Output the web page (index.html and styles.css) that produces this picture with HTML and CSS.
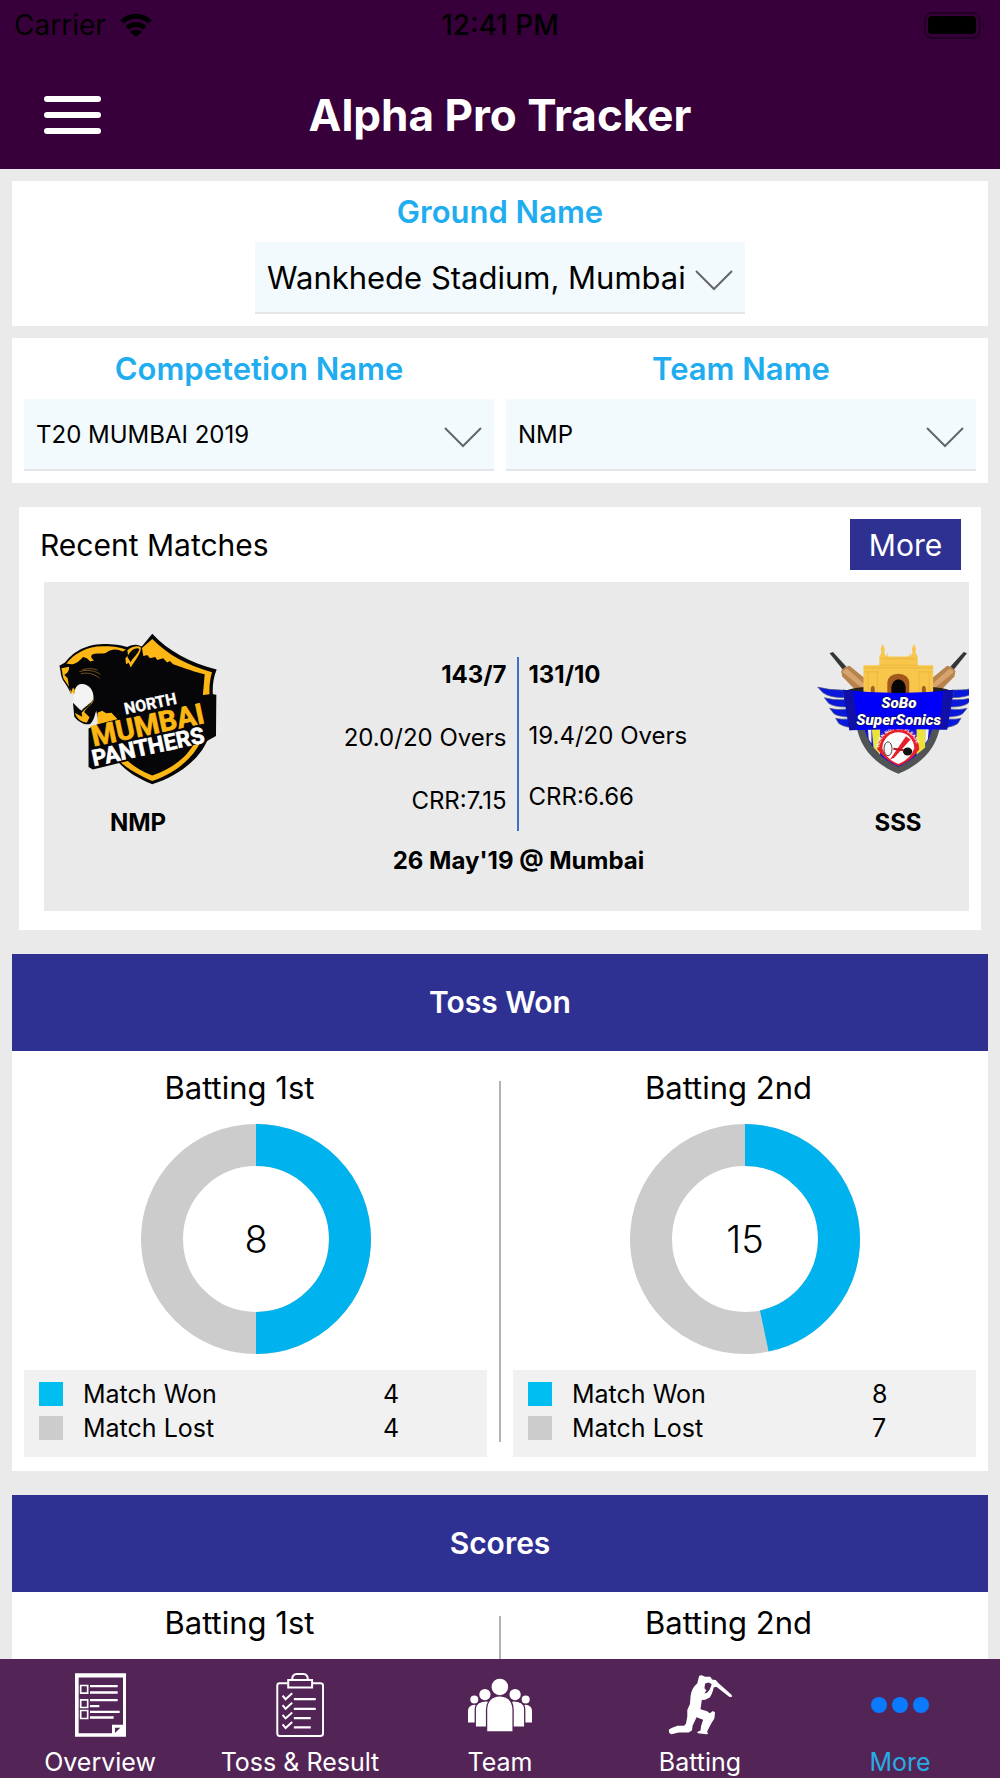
FILE: index.html
```
<!DOCTYPE html>
<html lang="en">
<head>
    <meta charset="UTF-8">
    <meta name="viewport" content="width=device-width, initial-scale=1.0">
    <title>Alpha Pro Tracker</title>
    <link rel="stylesheet" href="styles.css">
</head>
<body>
    <header class="header">
        <div class="status-bar">
            <div class="carrier">
                <span>Carrier</span>
                <svg width="32" height="24" viewBox="0 0 32 24">
                    <path d="M2 9 A20 20 0 0 1 30 9" fill="none" stroke="#000" stroke-width="5"/>
                    <path d="M7 15 A13 13 0 0 1 25 15" fill="none" stroke="#000" stroke-width="5"/>
                    <path d="M16 24 L10 19 A9 9 0 0 1 22 19 Z"/>
                </svg>
            </div>
            <span class="time">12:41 PM</span>
            <div class="battery">
                <svg width="62" height="27" viewBox="0 0 62 27">
                    <rect x="1" y="1" width="55" height="25" rx="7" fill="none" stroke="#220025" stroke-width="2"/>
                    <rect x="4" y="4" width="48" height="18" rx="4"/>
                    <path d="M59 9 Q62 13 59 18 Z" fill="#220025"/>
                </svg>
            </div>
        </div>
        <div class="title-bar">
            <button class="menu-button" type="button" aria-label="Menu">
                <span></span>
                <span></span>
                <span></span>
            </button>
            <h1>Alpha Pro Tracker</h1>
        </div>
    </header>

    <main class="content">
        <section class="filter-card">
            <div class="filter ground">
                <label for="ground">Ground Name</label>
                <div class="select-box">
                    <select id="ground">
                        <option>Wankhede Stadium, Mumbai</option>
                    </select>
                    <svg class="chevron" viewBox="0 0 38 21"><path d="M1 1 L19 19 L37 1"/></svg>
                </div>
            </div>
        </section>

        <section class="filter-card">
            <div class="filter">
                <label for="competition">Competetion Name</label>
                <div class="select-box">
                    <select id="competition">
                        <option>T20 MUMBAI 2019</option>
                    </select>
                    <svg class="chevron" viewBox="0 0 38 21"><path d="M1 1 L19 19 L37 1"/></svg>
                </div>
            </div>
            <div class="filter">
                <label for="team">Team Name</label>
                <div class="select-box">
                    <select id="team">
                        <option>NMP</option>
                    </select>
                    <svg class="chevron" viewBox="0 0 38 21"><path d="M1 1 L19 19 L37 1"/></svg>
                </div>
            </div>
        </section>

        <section class="recent">
            <div class="recent-head">
                <h2>Recent Matches</h2>
                <button class="more-button" type="button">More</button>
            </div>
            <div class="match">
                <div class="team">
                    <svg width="158" height="152" viewBox="56 66 476 458">
                        <path d="M337 68 C385 120 450 155 531 176 C515 215 518 250 524 300 L510 370 C490 440 420 495 337 522 C290 503 255 480 230 450 L200 300 L258 108 L306 106 Z" fill="#060608"/>
                        <path d="M337 84 C385 133 445 164 517 184 C508 215 508 240 511 280 L482 395 C460 440 410 488 337 512 C298 496 268 478 240 455 L300 330 L305 112 Z" fill="#fdb714"/>
                        <path d="M303 118 L300 138 L322 132 L330 142 L346 138 L352 147 L370 142 L382 155 L390 150 L400 160 C435 172 470 185 495 190 L487 280 L465 395 C445 435 400 475 337 495 C305 483 280 468 262 450 L200 380 L200 130 Z" fill="#060608"/>
                        <path d="M57 165 L74 155 C95 128 130 100 190 99 C220 99 245 103 262 108 C280 98 303 99 306 112 L330 250 L250 350 L178 345 L168 300 C162 320 160 330 150 340 C130 345 112 330 102 318 L98 276 C105 282 112 292 124 300 C132 288 150 282 160 265 C162 238 145 218 122 220 C112 222 104 228 102 250 L97 238 L92 250 C86 235 78 222 68 208 C60 195 62 180 57 165 Z" fill="#060608"/>
                        <path d="M102 250 C104 230 115 220 128 221 C148 224 160 243 158 262 C144 276 136 282 125 294 C116 288 110 280 98 276 Z" fill="#f4f4f4"/>
                        <g fill="#fdb714">
                            <path d="M78 158 C102 128 140 106 188 106 C220 105 242 110 258 116 L248 122 C230 113 215 114 200 124 C190 132 172 124 158 130 C150 134 152 142 162 148 L150 152 L140 142 L128 138 C118 150 106 160 92 160 Z"/>
                            <path d="M63 172 L86 168 C88 180 80 188 72 192 L82 202 L86 228 L74 210 C64 198 68 184 63 172 Z"/>
                            <path d="M262 118 C276 106 294 102 303 110 C302 130 288 145 272 170 L266 156 L258 160 L256 142 L264 134 Z"/>
                            <path d="M162 262 C160 280 140 288 132 304 L148 320 L140 336 C120 334 108 320 104 306 L114 312 L126 318 L124 306 C140 290 152 284 162 262 Z"/>
                            <path d="M88 232 L93 244 L98 230 L104 238 L101 252 L96 244 L91 250 Z"/>
                            <path d="M172 306 L186 300 L198 308 L214 306 L236 330 L172 348 Z"/>
                        </g>
                        <path d="M262 138 C270 118 290 108 298 114 C294 130 278 140 272 154 Z" fill="#060608"/>
                        <path d="M118 182 C140 176 160 178 180 190 M122 189 C142 184 160 188 178 202 M126 177 C142 172 158 172 172 178" fill="none" stroke="#a9762a" stroke-width="2"/>
                        <path d="M145 354 L170 342 L246 322 L252 268 L408 232 L412 262 L516 250 L530 252 L529 376 L494 396 L158 477 L145 470 Z" fill="#060608"/>
                        <g transform="rotate(-12 337 350)" font-family="Roboto, sans-serif" font-weight="bold">
                            <text x="266" y="296" font-size="48" fill="#fff" stroke="#fff">NORTH</text>
                            <text x="152" y="370" font-size="86" fill="#fdb714" stroke="#fdb714" stroke-width="2">MUMBAI</text>
                            <text x="140" y="428" font-size="68" fill="#fff" stroke="#fff" stroke-width="2">PANTHERS</text>
                        </g>
                    </svg>
                    <strong>NMP</strong>
                </div>

                <div class="score">
                    <div class="innings">
                        <div class="innings-side">
                            <strong>143/7</strong>
                            <span>20.0/20 Overs</span>
                            <span>CRR:7.15</span>
                        </div>
                        <div class="innings-side">
                            <strong>131/10</strong>
                            <span>19.4/20 Overs</span>
                            <span>CRR:6.66</span>
                        </div>
                    </div>
                    <strong>26 May'19 @ Mumbai</strong>
                </div>

                <div class="team away">
                    <svg width="152" height="132" viewBox="50 66 458 396">
                        <!-- bats -->
                        <g id="bat">
                            <path d="M88 96 L98 92 L138 136 L128 146 Z" fill="#333638"/>
                            <path d="M123 150 Q130 138 148 134 L192 170 L192 214 L165 206 L126 166 Z" fill="#b9834e"/>
                            <path d="M126 152 L140 142 L192 188 L192 206 Z" fill="#d6a56f"/>
                        </g>
                        <use href="#bat" transform="translate(590 0) scale(-1 1)"/>
                        <ellipse cx="295" cy="210" rx="155" ry="16" fill="#25201c"/>
                        <!-- gateway -->
                        <path d="M190 132 L238 132 L238 104 L244 96 L242 82 L248 68 L254 82 L253 96 L258 104 L270 106 L320 106 L332 104 L338 96 L336 82 L342 68 L348 82 L347 96 L353 104 L354 132 L400 132 L400 222 L190 222 Z" fill="#f7c64b"/>
                        <path d="M190 140 H400 M238 132 H354 M244 112 H348 M194 152 H236 M356 152 H398 M204 152 V215 M232 152 V215 M358 152 V215 M388 152 V215 M262 106 V96 M330 106 V96" stroke="#e8b03c" stroke-width="2" fill="none"/>
                        <path d="M262 222 V184 Q264 160 295 158 Q326 160 328 184 V222 Z" fill="#a3581d"/>
                        <path d="M274 222 V198 Q278 176 295 174 Q314 176 317 198 V222 Z" fill="#060606"/>
                        <path d="M212 218 V200 Q218 188 224 200 V218 Z M366 218 V200 Q372 188 378 200 V218 Z" fill="#9c601f"/>
                        <!-- shield -->
                        <path d="M168 310 C180 385 225 430 295 459 C365 430 410 385 422 310 Z" fill="#515454"/>
                        <path d="M190 310 C200 370 235 410 295 438 C355 410 390 370 400 310 Z" fill="#1616d8"/>
                        <path d="M214 310 H240 V402 L220 380 Z M350 310 H376 V380 L350 402 Z" fill="#eae33a"/>
                        <path d="M202 310 H214 V368 L206 355 Z M376 310 H388 L384 355 L376 368 Z" fill="#f5f5f5"/>
                        <path d="M232 385 A62 62 0 1 1 358 385 Q335 420 295 436 Q255 418 232 385 Z" fill="#e8202b"/>
                        <path d="M247 382 A48 48 0 1 1 343 382 Q335 412 295 430 Q255 412 247 382 Z" fill="#fff"/>
                        <path d="M318 346 L332 356 L282 412 L270 416 Z" fill="#e8202b"/>
                        <ellipse cx="264" cy="384" rx="12" ry="21" fill="#f7f7f7" stroke="#444" stroke-width="3"/>
                        <ellipse cx="323" cy="392" rx="14" ry="12" fill="#111"/>
                        <path d="M280 384 L312 388" stroke="#b51820" stroke-width="6"/>
                        <path id="horn" d="M238 384 A57 57 0 0 1 352 384" fill="none"/>
                        <text font-family="Liberation Sans, Arial, sans-serif" font-weight="bold" font-size="14" fill="#fff"><textPath href="#horn" startOffset="4">HORN NOT OK PLEASE</textPath></text>
                        <!-- wings -->
                        <g id="wing" fill="#0a18dd" stroke="#555b70" stroke-width="2">
                            <path d="M52 198 Q90 208 128 207 L132 230 Q88 230 68 215 Z"/>
                            <path d="M72 230 Q100 238 134 236 L138 258 Q100 258 85 247 Z"/>
                            <path d="M88 262 Q110 268 140 264 L144 288 Q112 286 101 278 Z"/>
                            <path d="M106 292 Q120 296 146 294 L150 320 Q126 316 116 308 Z"/>
                        </g>
                        <use href="#wing" transform="translate(590 0) scale(-1 1)"/>
                        <!-- ribbon -->
                        <path d="M128 206 Q295 226 462 206 L442 326 Q295 324 148 328 Z" fill="#0000fa"/>
                        <path d="M128 206 L160 210 L172 326 L148 328 Z M462 206 L430 210 L418 326 L442 326 Z" fill="#1010a8"/>
                        <g font-family="Roboto, sans-serif" font-weight="900" font-style="italic" fill="#fff" stroke="#111" stroke-width="3" paint-order="stroke" text-anchor="middle">
                            <text x="297" y="260" font-size="46">SoBo</text>
                            <text x="296" y="311" font-size="46">SuperSonics</text>
                        </g>
                    </svg>
                    <strong>SSS</strong>
                </div>
            </div>
        </section>

        <section class="stats">
            <h2>Toss Won</h2>
            <div class="stats-body">
                <div class="stats-half">
                    <h3>Batting 1st</h3>
                    <svg class="donut" viewBox="0 0 230 230">
                        <circle cx="115" cy="115" r="94" stroke="#ccc"/>
                        <circle cx="115" cy="115" r="94" stroke="#00b2ed" pathLength="8" stroke-dasharray="4 4" transform="rotate(-90 115 115)"/>
                        <text x="115" y="129">8</text>
                    </svg>
                    <table class="legend">
                        <tr>
                            <td><span class="swatch won"></span></td>
                            <th scope="row">Match Won</th>
                            <td>4</td>
                        </tr>
                        <tr>
                            <td><span class="swatch lost"></span></td>
                            <th scope="row">Match Lost</th>
                            <td>4</td>
                        </tr>
                    </table>
                </div>
                <div class="divider"></div>
                <div class="stats-half">
                    <h3>Batting 2nd</h3>
                    <svg class="donut" viewBox="0 0 230 230">
                        <circle cx="115" cy="115" r="94" stroke="#ccc"/>
                        <circle cx="115" cy="115" r="94" stroke="#00b2ed" pathLength="1000" stroke-dasharray="467 533" transform="rotate(-90 115 115)"/>
                        <text x="115" y="129">15</text>
                    </svg>
                    <table class="legend">
                        <tr>
                            <td><span class="swatch won"></span></td>
                            <th scope="row">Match Won</th>
                            <td>8</td>
                        </tr>
                        <tr>
                            <td><span class="swatch lost"></span></td>
                            <th scope="row">Match Lost</th>
                            <td>7</td>
                        </tr>
                    </table>
                </div>
            </div>
        </section>

        <section class="stats scores">
            <h2>Scores</h2>
            <div class="stats-body">
                <div class="stats-half">
                    <h3>Batting 1st</h3>
                </div>
                <div class="divider"></div>
                <div class="stats-half">
                    <h3>Batting 2nd</h3>
                </div>
            </div>
        </section>
    </main>

    <nav class="tab-bar">
        <a href="#">
            <svg width="51" height="64" viewBox="102 40 153 191">
                <path d="M102 40 H255 V231 H102 Z M113 53 V220 H213 V195 H246 V53 Z" fill="#fff" fill-rule="evenodd"/>
                <path d="M222 220 V204 H238 Z" fill="#532557"/>
                <path d="M222 220 L246 198 V222 H222 Z" fill="#fff"/>
                <path d="M119 77 H140 V100 H119 Z M119 120 H140 V143 H119 Z M119 152 H140 V176 H119 Z" fill="none" stroke="#fff" stroke-width="5"/>
                <path d="M147 79 H230 M147 98 H230 M147 121 H230 M147 139 H175 M147 156 H236 M147 173 H218" stroke="#fff" stroke-width="7"/>
            </svg>
            <span>Overview</span>
        </a>
        <a href="#">
            <svg width="48" height="64" viewBox="708 38 143 193" fill="none" stroke="#fff" stroke-width="6">
                <path d="M742 69 H718 Q711 69 711 76 V220 Q711 228 718 228 H841 Q849 228 849 220 V76 Q849 69 841 69 H818"/>
                <path d="M744 59 H816 V82 H744 Z M756 58 Q756 41 770 41 H790 Q803 41 803 58"/>
                <path d="M761 117 H827 M761 146 H827 M761 174 H812 M761 202 H812" stroke-width="7"/>
                <path d="M727 106 L736 117 L756 99 M727 135 L736 146 L756 128 M727 164 L736 175 L756 157 M727 193 L736 204 L756 186"/>
            </svg>
            <span>Toss &amp; Result</span>
        </a>
        <a href="#">
            <svg width="64" height="64" viewBox="83 39 193 193" fill="#fff">
                <circle cx="179" cy="81" r="25"/>
                <circle cx="134" cy="104" r="17"/>
                <circle cx="225" cy="104" r="17"/>
                <circle cx="102" cy="119" r="12"/>
                <circle cx="257" cy="119" r="12"/>
                <path d="M141 215 V148 Q143 112 179 110 Q215 112 217 148 V215 Z"/>
                <path d="M107 200 V146 Q109 127 136 125 L143 126 Q137 136 137 150 V200 Z M252 200 V146 Q250 127 223 125 L216 126 Q221 136 221 150 V200 Z"/>
                <path d="M83 188 V152 Q84 137 103 135 L106 136 Q103 140 103 150 V188 Z M276 188 V152 Q275 137 256 135 L253 136 Q256 140 256 150 V188 Z"/>
            </svg>
            <span>Team</span>
        </a>
        <a href="#">
            <svg width="65" height="64" viewBox="681 38 194 194" fill="#fff">
                <path d="M774 46 L782 45 L792 49 L808 49 L813 58 L824 59 L832 68 L872 104 L874 110 L866 111 L826 80 L818 82 C816 92 812 104 806 112 L792 119 L782 120 L778 148 L798 154 L806 160 L816 153 L822 158 L820 176 L810 192 L802 208 L798 216 L801 222 L796 224 L770 221 L768 217 L778 212 L780 198 L786 180 L766 172 L754 198 L752 212 L742 218 L712 218 L690 224 L683 220 L682 210 L690 205 L708 198 L728 198 L734 192 L738 170 L738 150 L746 132 L748 108 C750 92 756 80 768 70 Z"/>
                <path d="M792 70 L803 67 L812 72 L806 88 L798 98 L790 100 L796 90 L790 84 Z" fill="#532557"/>
            </svg>
            <span>Batting</span>
        </a>
        <a class="active" href="#">
            <svg width="58" height="64" viewBox="0 0 58 64" fill="#0a7bff">
                <circle cx="8" cy="32" r="8"/>
                <circle cx="29" cy="32" r="8"/>
                <circle cx="50" cy="32" r="8"/>
            </svg>
            <span>More</span>
        </a>
    </nav>
</body>
</html>
```
FILE: styles.css
```
* {
    box-sizing: border-box;
}

body {
    display: flex;
    flex-direction: column;
    height: 100vh;
    margin: 0;
    font-family: Inter, sans-serif;
    font-size: 25px;
    color: #000;
    background-color: #eaeaea;
}

h1, h2, h3 {
    margin: 0;
}

button, select {
    font-family: inherit;
    border: none;
}

/* Header */
.header {
    flex: none;
    background-color: #38003b;
}

.status-bar {
    display: grid;
    grid-template-columns: 1fr auto 1fr;
    align-items: center;
    height: 50px;
    padding: 0 14px;
    font-size: 28px;
}

.carrier {
    display: flex;
    align-items: center;
    gap: 14px;
}

.time {
    font-weight: 500;
}

.battery {
    display: flex;
    justify-content: flex-end;
}

.title-bar {
    display: grid;
    grid-template-columns: 1fr auto 1fr;
    align-items: center;
    height: 119px;
    padding: 10px 44px 0;
}

.title-bar h1 {
    font-size: 44px;
    font-weight: 700;
    color: #fff;
}

.menu-button {
    display: flex;
    flex-direction: column;
    justify-content: space-between;
    width: 57px;
    height: 38px;
    padding: 0;
    background: none;
    cursor: pointer;
}

.menu-button span {
    height: 6px;
    border-radius: 3px;
    background-color: #fff;
}

/* Scrolling content */
.content {
    flex: 1;
    display: flex;
    flex-direction: column;
    gap: 24px;
    min-height: 0;
    padding: 12px 12px 0;
    overflow-y: auto;
    scrollbar-width: none;
}

.filter-card {
    flex: none;
    display: flex;
    justify-content: center;
    gap: 12px;
    padding: 12px;
    background-color: #fff;
}

.filter-card + .filter-card {
    margin-top: -12px;
}

.filter {
    flex: 1;
}

.filter.ground {
    flex: 0 0 490px;
}

.filter label {
    display: block;
    margin-bottom: 11px;
    line-height: 38px;
    font-size: 31px;
    font-weight: 600;
    text-align: center;
    color: #1fadf0;
}

.select-box {
    position: relative;
    border-bottom: 2px solid #e6e6ea;
}

.select-box select {
    display: block;
    width: 100%;
    height: 70px;
    padding: 0 12px;
    appearance: none;
    font-size: 24px;
    color: #000;
    background-color: #f2fafd;
}

.select-box #ground {
    font-size: 31px;
}

.chevron {
    position: absolute;
    right: 12px;
    top: 28px;
    width: 38px;
    height: 21px;
    fill: none;
    stroke: #666;
    stroke-width: 2;
    pointer-events: none;
}

/* Recent matches */
.recent {
    flex: none;
    margin: 0 7px;
    padding: 12px 12px 19px 25px;
    background-color: #fff;
}

.recent-head {
    display: flex;
    justify-content: space-between;
    align-items: center;
    margin-bottom: 12px;
    padding-right: 8px;
}

.recent-head h2 {
    margin-left: -4px;
    font-size: 30px;
    font-weight: 400;
}

.more-button {
    width: 111px;
    height: 51px;
    font-size: 30px;
    color: #fff;
    background-color: #2e3192;
    cursor: pointer;
}

.match {
    display: flex;
    justify-content: space-between;
    height: 329px;
    padding-top: 51px;
    line-height: 30px;
    font-size: 24px;
    background-color: #eaeaea;
}

.team {
    display: flex;
    flex-direction: column;
    align-items: center;
    width: 188px;
}

.team svg {
    flex: none;
    margin-bottom: 23px;
}

.team.away {
    align-items: flex-end;
    width: 164px;
}

.team.away svg {
    margin: 10px 0 33px;
}

.team.away strong {
    width: 142px;
    text-align: center;
}

.score {
    flex: 1;
    text-align: center;
}

.innings {
    display: grid;
    grid-template-columns: 1fr 1fr;
    margin: 24px 0 15px;
}

.innings-side {
    display: flex;
    flex-direction: column;
    gap: 31px;
    height: 174px;
    padding: 3px 10px;
    text-align: left;
}

.innings-side:first-child {
    gap: 33px;
    border-right: 2px solid #3f6fc6;
    text-align: right;
}

strong {
    font-weight: 700;
}

/* Stats */
.stats {
    flex: none;
    background-color: #fff;
}

.stats > h2 {
    line-height: 97px;
    font-size: 30px;
    font-weight: 600;
    text-align: center;
    color: #fff;
    background-color: #2e3192;
}

.stats-body {
    display: flex;
    gap: 12px;
    padding: 18px 12px 14px;
}

.stats-half {
    flex: 1;
    display: flex;
    flex-direction: column;
    align-items: center;
}

.stats-half h3 {
    padding-right: 32px;
    line-height: 38px;
    font-size: 31px;
    font-weight: 400;
}

.divider {
    width: 2px;
    margin: 12px 0 15px;
    background-color: #b3b3b3;
}

.donut {
    width: 230px;
    height: 230px;
    margin: 17px 0 16px;
}

.donut circle {
    fill: none;
    stroke-width: 42;
}

.donut text {
    font-size: 38px;
    font-weight: 300;
    text-anchor: middle;
}

.legend {
    width: 100%;
    padding: 7px 0 12px 15px;
    border-spacing: 0;
    line-height: 34px;
    background-color: #f1f1f1;
}

.legend td, .legend th {
    padding: 0;
    font-weight: 400;
    text-align: left;
}

.legend td:first-child {
    width: 44px;
}

.legend td:last-child {
    width: 104px;
}

.swatch {
    display: block;
    width: 24px;
    height: 24px;
}

.swatch.won {
    background-color: #00bff0;
}

.swatch.lost {
    background-color: #ccc;
}

.scores .stats-body {
    height: 200px;
    padding-top: 12px;
}

/* Bottom tabs */
.tab-bar {
    flex: none;
    display: flex;
    padding: 14px 0 1px;
    background-color: #532557;
}

.tab-bar a {
    flex: 1;
    display: flex;
    flex-direction: column;
    align-items: center;
    gap: 10px;
    line-height: 30px;
    color: #fff;
    text-decoration: none;
}

.tab-bar a.active {
    color: #29abe2;
}
```
